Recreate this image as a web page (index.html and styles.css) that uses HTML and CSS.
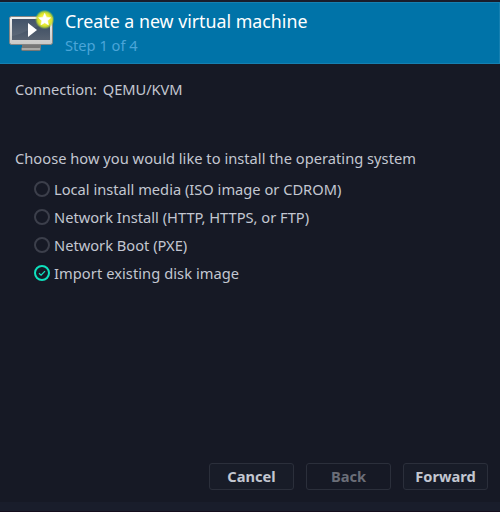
FILE: index.html
```html
<!DOCTYPE html>
<html lang="en">
<head>
<meta charset="utf-8">
<title>New VM</title>
<link rel="stylesheet" href="styles.css">
</head>
<body>
<main class="window">
  <header class="header">
    <svg class="logo" width="54" height="52" viewBox="0 0 54 52">
      <defs>
        <radialGradient id="glow"><stop offset="0" stop-color="#fff76a"/><stop offset=".6" stop-color="#e4e92c"/><stop offset=".78" stop-color="#c8dc2c" stop-opacity=".85"/><stop offset="1" stop-color="#8bc83a" stop-opacity="0"/></radialGradient>
        <linearGradient id="screen" x1="0" y1="0" x2="0" y2="1"><stop offset="0" stop-color="#35475e"/><stop offset="1" stop-color="#586372"/></linearGradient>
        <linearGradient id="frame" x1="0" y1="0" x2="0" y2="1"><stop offset="0" stop-color="#f2f2f1"/><stop offset="1" stop-color="#c9c9c7"/></linearGradient>
      </defs>
      <path d="M17 38h19v4H17z" fill="#777"/>
      <rect x="16.500" y="41.500" width="19" height="3" rx="1" fill="#a9a9a6" stroke="#777775"/>
      <rect x="4.500" y="10.500" width="43" height="28" rx="2" fill="url(#frame)" stroke="#858583"/>
      <rect x="7" y="13" width="38" height="21" fill="url(#screen)"/>
      <path d="M7 13h38v5C28 19 20 28 7 30z" fill="#fff" opacity=".07"/>
      <path d="M23 17l9 7-9 7z" fill="#fff"/>
      <circle cx="39.700" cy="13.500" r="9.800" fill="url(#glow)"/>
      <path d="M39.700 7.300l1.800 3.900 4.300.5-3.200 3 .9 4.200-3.800-2.100-3.800 2.100.9-4.200-3.200-3 4.300-.5z" fill="#fff" stroke="#fff" stroke-width=".5"/>
    </svg>
    <div class="heading">
      <h1 class="title">Create a new virtual machine</h1>
      <p class="step">Step 1 of 4</p>
    </div>
  </header>
  <section class="content">
    <p class="connection"><span>Connection:</span><span>QEMU/KVM</span></p>
    <p class="prompt">Choose how you would like to install the operating system</p>
    <ul class="options">
      <li class="option"><span class="radio"></span>Local install media (ISO image or CDROM)</li>
      <li class="option"><span class="radio"></span>Network Install (HTTP, HTTPS, or FTP)</li>
      <li class="option"><span class="radio"></span>Network Boot (PXE)</li>
      <li class="option option-on"><span class="radio radio-on"><svg width="12" height="12" viewBox="0 0 12 12"><path d="M3 6.200l2.100 2 3.900-4.100" fill="none" stroke="#0fe0bd" stroke-width="1.300"/></svg></span>Import existing disk image</li>
    </ul>
  </section>
  <footer class="actions">
    <button class="button">Cancel</button>
    <button class="button" disabled>Back</button>
    <button class="button">Forward</button>
  </footer>
  <div class="bottom-edge"></div>
</main>
</body>
</html>
```
FILE: styles.css
```css
* { box-sizing: border-box; }
body {
  margin: 0;
  background: #161925;
  color: #c3c7d1;
  font: 14.67px/20px "Noto Sans", sans-serif;
}
h1, p, ul { margin: 0; padding: 0; font-weight: 400; }
.window {
  width: 500px;
  height: 512px;
  display: flex;
  flex-direction: column;
  border-top: 2px solid #191d2b;
}
.header {
  height: 62px;
  display: flex;
  background: #0073a8;
  border: 1px solid #1580b1;
  border-left: 0;
  padding: 1px 0 0 5px;
}
.logo { flex: none; margin-top: 2px; }
.heading { padding: 5px 0 0 6px; }
.title { color: #fff; font-size: 17.8px; line-height: 24px; white-space: nowrap; }
.step { color: #4aa5d8; line-height: 24px; }
.content { flex: 1; padding: 15px 15px 0; }
.connection { display: flex; gap: 6px; letter-spacing: -0.06px; }
.prompt { margin-top: 49px; letter-spacing: 0.02px; }
.options { list-style: none; margin-top: 7px; padding-left: 19px; }
.option { height: 28px; display: flex; align-items: center; gap: 4px; }
.option-on { letter-spacing: 0.06px; }
.radio {
  width: 16px;
  height: 16px;
  border: 2px solid #3c3f4b;
  border-radius: 50%;
  display: flex;
}
.radio-on { border-color: #0fe0bd; }
.actions {
  display: flex;
  justify-content: flex-end;
  gap: 12px;
  padding: 0 12px 12px;
}
.button {
  width: 85px;
  height: 27px;
  padding: 0 0 2px;
  border: 1px solid #2b2f3b;
  border-radius: 3px;
  background: #181c28;
  color: #c3c7d1;
  font: 700 14.67px/20px "Noto Sans", sans-serif;
}
.button:disabled { color: #6b6e78; background: #161925; }
.bottom-edge { height: 10px; background: #191d2b; border-bottom: 1px solid #140d1d; }
```
